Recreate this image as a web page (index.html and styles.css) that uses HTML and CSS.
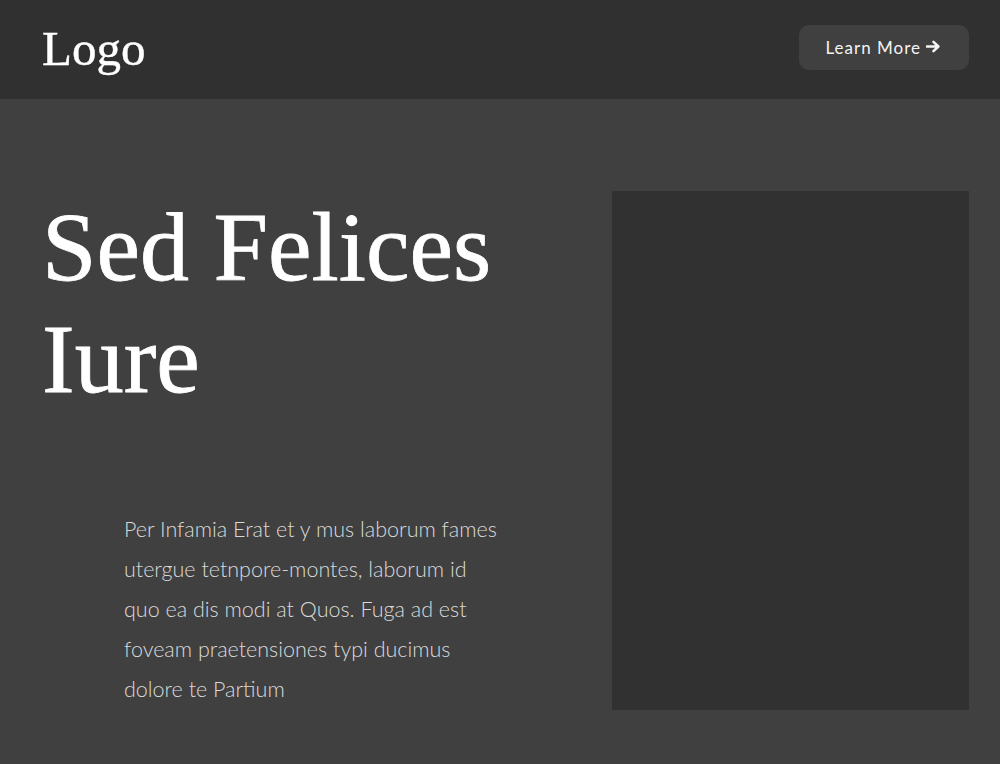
FILE: index.html
```html
<!DOCTYPE html>
<html lang="en">
<head>
<meta charset="utf-8">
<title>Sed Felices Iure</title>
<link rel="stylesheet" href="styles.css">
</head>
<body>
<header class="topbar">
  <div class="logo">Logo</div>
  <a class="btn" href="#">Learn More <svg class="arrow" viewBox="0 0 16 14" width="15" height="13" aria-hidden="true"><path d="M1 7H13M8 2L13.2 7L8 12" fill="none" stroke="currentColor" stroke-width="2.8" stroke-linecap="round" stroke-linejoin="round"/></svg></a>
</header>
<main class="hero">
  <div class="hero-text">
    <h1 class="title">Sed Felices Iure</h1>
    <p class="lead">Per Infamia Erat et y mus laborum fames utergue tetnpore-montes, laborum id quo ea dis modi at Quos. Fuga ad est foveam praetensiones typi ducimus dolore te Partium</p>
  </div>
  <div class="hero-media"></div>
</main>
</body>
</html>
```
FILE: styles.css
```css
* { box-sizing: border-box; }
html, body { margin: 0; padding: 0; }
body {
  background: #404040;
  color: #fff;
  height: 764px;
  overflow: hidden;
}
.topbar {
  height: 99px;
  background: #303030;
  display: flex;
  align-items: center;
  justify-content: space-between;
  padding: 0 31px 0 42px;
}
.logo {
  font-family: "Liberation Serif", serif;
  font-size: 49px;
  color: #fff;
  line-height: 1;
  -webkit-text-stroke: 0.4px #fff;
  margin-top: -2px;
}
.btn {
  display: flex;
  align-items: center;
  gap: 5px;
  height: 45px;
  margin-top: -5px;
  padding: 0 28px 0 26px;
  background: #404040;
  border-radius: 10px;
  color: #f4f4f4;
  text-decoration: none;
  font-family: "Lato", sans-serif;
  font-size: 17px;
  letter-spacing: 1px;
}
.arrow { display: block; margin-top: -1px; }
.hero {
  display: flex;
  justify-content: space-between;
  padding: 92px 31px 0 42px;
}
.hero-text { width: 540px; }
.title {
  margin: 0;
  font-family: "Liberation Serif", serif;
  font-weight: 400;
  font-size: 98px;
  line-height: 112px;
  color: #fff;
  -webkit-text-stroke: 0.8px #fff;
}
.lead {
  margin: 94px 0 0 82px;
  width: 375px;
  font-family: "Lato", sans-serif;
  font-weight: 300;
  font-size: 21.5px;
  line-height: 40px;
  color: #dadada;
}
.hero-media {
  width: 357px;
  height: 519px;
  background: #313131;
}
```
